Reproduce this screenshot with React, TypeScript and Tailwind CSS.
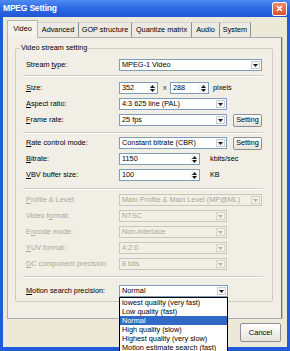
import React from "react";

const Arrow = ({ color }: { color: string }) => (
  <svg width="5" height="3" viewBox="0 0 5 3">
    <path d="M0 0h5L2.5 3z" fill={color} />
  </svg>
);

const Combo = ({ value, className, disabled }: { value: string; className: string; disabled?: boolean }) => (
  <div
    className={`flex h-[12px] border ${className} ${
      disabled ? "border-[#C9C7BA] bg-[#F1EFE6] text-[#ACA899]" : "border-[#7F9DB9] bg-white text-black"
    }`}
  >
    <div className="flex-1 truncate pl-[2px] leading-[10px]">{value}</div>
    <div
      className={`my-[1px] mr-[1px] flex w-[9px] items-center justify-center border ${
        disabled ? "border-[#D6D3C5] bg-[#F3F1EA]" : "border-[#C9CED8] bg-[#F4F4F2]"
      }`}
    >
      <Arrow color={disabled ? "#B5B3A8" : "#1A1A1A"} />
    </div>
  </div>
);

const Spin = ({ value, className }: { value: string; className: string }) => (
  <div className={`flex h-[12px] border border-[#7F9DB9] bg-white ${className}`}>
    <div className="flex-1 pl-[2px] leading-[10px]">{value}</div>
    <div className="my-[1px] mr-[1px] flex w-[8px] flex-col items-center justify-center gap-[1px] bg-[#F4F4F2]">
      <svg width="5" height="3" viewBox="0 0 5 3">
        <path d="M0 3h5L2.5 0z" fill="#1A1A1A" />
      </svg>
      <svg width="5" height="3" viewBox="0 0 5 3">
        <path d="M0 0h5L2.5 3z" fill="#1A1A1A" />
      </svg>
    </div>
  </div>
);

const Button = ({ children, className }: { children: React.ReactNode; className: string }) => (
  <div
    className={`flex items-center justify-center rounded-[2px] border border-[#8C8F9A] bg-gradient-to-b from-[#FFFFFF] to-[#E6E3D8] ${className}`}
  >
    {children}
  </div>
);

const Row = ({ label, children, className, disabled }: { label: React.ReactNode; children: React.ReactNode; className: string; disabled?: boolean }) => (
  <div className={`flex h-[12px] items-center pl-[10px] ${className}`}>
    <div className={`w-[93px] ${disabled ? "text-[#ACA899]" : "text-black"}`}>{label}</div>
    {children}
  </div>
);

const Sep = ({ className }: { className: string }) => (
  <div className={`ml-[7px] w-[240px] border-t border-b border-t-[#D0CEBF] border-b-white ${className}`} />
);

const tabs = [
  { name: "Advanced", w: "w-[41px]" },
  { name: "GOP structure", w: "w-[53px]" },
  { name: "Quantize matrix", w: "w-[60px]" },
  { name: "Audio", w: "w-[28px]" },
  { name: "System", w: "w-[31px]" },
];

const options = [
  "lowest quality (very fast)",
  "Low quality (fast)",
  "Normal",
  "High quality (slow)",
  "Highest quality (very slow)",
  "Motion estimate search (fast)",
];

export default function App() {
  return (
    <div className="relative flex h-[351px] w-[290px] flex-col overflow-hidden bg-[#1F5BDB] font-['Liberation_Sans',Arial,sans-serif] text-[7.3px] text-black">
      {/* title bar */}
      <div className="flex h-[17px] items-center justify-between bg-gradient-to-b from-[#4F8BF2] via-[#2C68E4] to-[#1F56D6] pl-[3px] pr-[3px]">
        <span className="text-[8.5px] font-bold tracking-[-0.2px] text-white">MPEG Setting</span>
        <div className="flex h-[14px] w-[15px] items-center justify-center rounded-[2px] border border-white bg-gradient-to-b from-[#EE8A6A] to-[#D9502A]">
          <svg width="7" height="7" viewBox="0 0 7 7">
            <path d="M1 1l5 5M6 1l-5 5" stroke="white" strokeWidth="1.6" />
          </svg>
        </div>
      </div>

      {/* body */}
      <div className="mx-[3px] mb-[4px] flex flex-1 flex-col bg-[#ECE9D8]">
        {/* tabs */}
        <div className="mt-[3px] flex h-[17px] items-end pl-[4px]">
          <div className="z-10 -mb-[1px] flex h-[18px] w-[31px] items-center justify-center border border-b-0 border-[#B5B8B8] bg-[#F3F2EC] pb-[1px]">
            Video
          </div>
          {tabs.map((t) => (
            <div
              key={t.name}
              className={`flex h-[15px] items-center justify-center border-t border-r border-t-[#D5D6D4] border-r-[#8A8F90] bg-[#ECEAE0] ${t.w}`}
            >
              {t.name}
            </div>
          ))}
        </div>

        {/* panel */}
        <div className="ml-[4px] flex h-[282px] w-[275px] flex-col border border-[#A9AEAF] border-r-[#6F7475] bg-[#F0EEE5] shadow-[1px_0_0_#C8C6BA]">
          {/* group box */}
          <div className="relative mt-[10px] ml-[7px] flex h-[254px] w-[258px] flex-col rounded-[2px] border border-[#D0CEBF]">
            <span className="absolute -top-[6px] left-[4px] bg-[#F0EEE5] px-[1px] leading-[10px]">Video stream setting</span>

            <Row label={<>Stream <u>t</u>ype:</>} className="mt-[10px]">
              <Combo value="MPEG-1 Video" className="w-[143px]" />
            </Row>
            <Sep className="mt-[4px]" />

            <Row label={<><u>S</u>ize:</>} className="mt-[5px]">
              <Spin value="352" className="w-[39px]" />
              <span className="ml-[5px] w-[7px] text-[#333]">x</span>
              <Spin value="288" className="w-[39px]" />
              <span className="ml-[4px]">pixels</span>
            </Row>
            <Row label={<><u>A</u>spect ratio:</>} className="mt-[4px]">
              <Combo value="4:3 625 line (PAL)" className="w-[108px]" />
            </Row>
            <Row label={<><u>F</u>rame rate:</>} className="mt-[4px]">
              <Combo value="25 fps" className="w-[108px]" />
              <Button className="ml-[6px] h-[13px] w-[29px]">Setting</Button>
            </Row>
            <Sep className="mt-[6px]" />

            <Row label={<><u>R</u>ate control mode:</>} className="mt-[3px]">
              <Combo value="Constant bitrate (CBR)" className="w-[108px]" />
              <Button className="ml-[6px] h-[13px] w-[29px]">Setting</Button>
            </Row>
            <Row label={<><u>B</u>itrate:</>} className="mt-[4px]">
              <Spin value="1150" className="w-[81px]" />
              <span className="ml-[10px]">kbits/sec</span>
            </Row>
            <Row label={<><u>V</u>BV buffer size:</>} className="mt-[4px]">
              <Spin value="100" className="w-[81px]" />
              <span className="ml-[10px]">KB</span>
            </Row>
            <Sep className="mt-[7px]" />

            <Row label={<><u>P</u>rofile &amp; Level:</>} className="mt-[4px]" disabled>
              <Combo value="Main Profile & Main Level (MP@ML)" className="w-[143px]" disabled />
            </Row>
            <Row label={<>Video f<u>o</u>rmat:</>} className="mt-[4px]" disabled>
              <Combo value="NTSC" className="w-[108px]" disabled />
            </Row>
            <Row label={<>E<u>n</u>code mode:</>} className="mt-[4px]" disabled>
              <Combo value="Non-interlace" className="w-[108px]" disabled />
            </Row>
            <Row label={<><u>Y</u>UV format:</>} className="mt-[4px]" disabled>
              <Combo value="4:2:0" className="w-[108px]" disabled />
            </Row>
            <Row label={<><u>D</u>C component precision:</>} className="mt-[4px]" disabled>
              <Combo value="8 bits" className="w-[108px]" disabled />
            </Row>
            <Sep className="mt-[6px]" />

            <Row label={<><u>M</u>otion search precision:</>} className="mt-[7px]">
              <Combo value="Normal" className="w-[109px]" />
            </Row>
          </div>
        </div>

        {/* buttons */}
        <div className="mt-[4px] flex justify-end pr-[6px]">
          <Button className="h-[19px] w-[41px] text-[7.5px]">Cancel</Button>
        </div>
      </div>

      {/* open dropdown list */}
      <div className="absolute left-[119px] top-[297px] w-[109px] border border-black bg-white">
        {options.map((o) => (
          <div
            key={o}
            className={`h-[9px] pl-[2px] leading-[9px] ${o === "Normal" ? "bg-[#316AC5] text-white" : "text-black"}`}
          >
            {o}
          </div>
        ))}
      </div>
    </div>
  );
}
